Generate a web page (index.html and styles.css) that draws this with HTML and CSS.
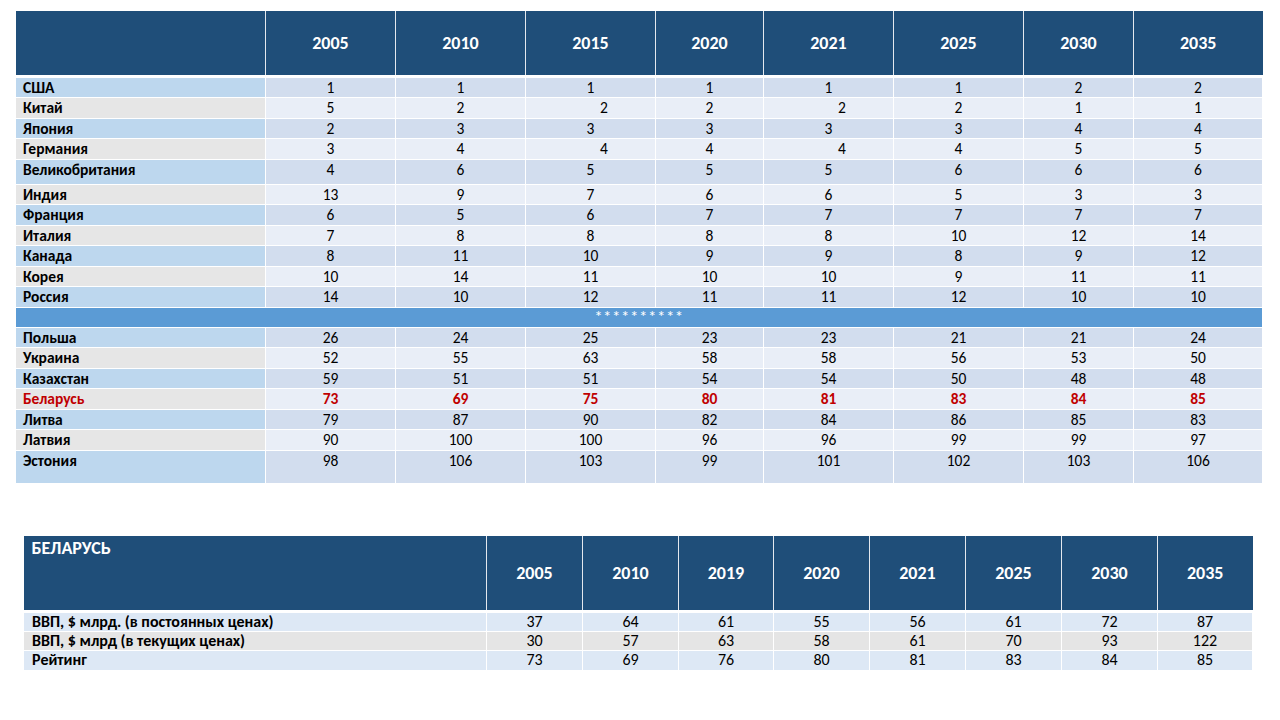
FILE: index.html
```html
<!DOCTYPE html>
<html lang="ru">
<head>
<meta charset="utf-8">
<title>Рейтинг ВВП</title>
<link rel="stylesheet" href="styles.css">
</head>
<body>
<div class="page">
  <table class="rank">
    <colgroup>
      <col class="c-label"><col class="c130"><col class="c130"><col class="c130"><col class="c108"><col class="c130"><col class="c130"><col class="c110"><col class="c129">
    </colgroup>
    <thead>
      <tr class="head"><th></th><th>2005</th><th>2010</th><th>2015</th><th>2020</th><th>2021</th><th>2025</th><th>2030</th><th>2035</th></tr>
    </thead>
    <tbody>
      <tr class="odd"><td class="lab">США</td><td>1</td><td>1</td><td>1</td><td>1</td><td>1</td><td>1</td><td>2</td><td>2</td></tr>
      <tr class="even"><td class="lab">Китай</td><td>5</td><td>2</td><td class="shift">2</td><td>2</td><td class="shift">2</td><td>2</td><td>1</td><td>1</td></tr>
      <tr class="odd"><td class="lab">Япония</td><td>2</td><td>3</td><td>3</td><td>3</td><td>3</td><td>3</td><td>4</td><td>4</td></tr>
      <tr class="even"><td class="lab">Германия</td><td>3</td><td>4</td><td class="shift">4</td><td>4</td><td class="shift">4</td><td>4</td><td>5</td><td>5</td></tr>
      <tr class="odd tall"><td class="lab">Великобритания</td><td>4</td><td>6</td><td>5</td><td>5</td><td>5</td><td>6</td><td>6</td><td>6</td></tr>
      <tr class="even"><td class="lab">Индия</td><td>13</td><td>9</td><td>7</td><td>6</td><td>6</td><td>5</td><td>3</td><td>3</td></tr>
      <tr class="odd"><td class="lab">Франция</td><td>6</td><td>5</td><td>6</td><td>7</td><td>7</td><td>7</td><td>7</td><td>7</td></tr>
      <tr class="even"><td class="lab">Италия</td><td>7</td><td>8</td><td>8</td><td>8</td><td>8</td><td>10</td><td>12</td><td>14</td></tr>
      <tr class="odd"><td class="lab">Канада</td><td>8</td><td>11</td><td>10</td><td>9</td><td>9</td><td>8</td><td>9</td><td>12</td></tr>
      <tr class="even"><td class="lab">Корея</td><td>10</td><td>14</td><td>11</td><td>10</td><td>10</td><td>9</td><td>11</td><td>11</td></tr>
      <tr class="odd"><td class="lab">Россия</td><td>14</td><td>10</td><td>12</td><td>11</td><td>11</td><td>12</td><td>10</td><td>10</td></tr>
      <tr class="sep"><td colspan="9">**********</td></tr>
      <tr class="odd"><td class="lab">Польша</td><td>26</td><td>24</td><td>25</td><td>23</td><td>23</td><td>21</td><td>21</td><td>24</td></tr>
      <tr class="even"><td class="lab">Украина</td><td>52</td><td>55</td><td>63</td><td>58</td><td>58</td><td>56</td><td>53</td><td>50</td></tr>
      <tr class="odd"><td class="lab">Казахстан</td><td>59</td><td>51</td><td>51</td><td>54</td><td>54</td><td>50</td><td>48</td><td>48</td></tr>
      <tr class="even hl"><td class="lab">Беларусь</td><td>73</td><td>69</td><td>75</td><td>80</td><td>81</td><td>83</td><td>84</td><td>85</td></tr>
      <tr class="odd"><td class="lab">Литва</td><td>79</td><td>87</td><td>90</td><td>82</td><td>84</td><td>86</td><td>85</td><td>83</td></tr>
      <tr class="even"><td class="lab">Латвия</td><td>90</td><td>100</td><td>100</td><td>96</td><td>96</td><td>99</td><td>99</td><td>97</td></tr>
      <tr class="odd last"><td class="lab">Эстония</td><td>98</td><td>106</td><td>103</td><td>99</td><td>101</td><td>102</td><td>103</td><td>106</td></tr>
    </tbody>
  </table>

  <table class="by">
    <colgroup>
      <col class="b-label"><col class="b96"><col class="b96"><col class="b95"><col class="b96"><col class="b96"><col class="b96"><col class="b96"><col class="b95">
    </colgroup>
    <thead>
      <tr class="bhead"><th class="title">БЕЛАРУСЬ</th><th>2005</th><th>2010</th><th>2019</th><th>2020</th><th>2021</th><th>2025</th><th>2030</th><th>2035</th></tr>
    </thead>
    <tbody>
      <tr class="blue"><td class="lab">ВВП, $ млрд. (в постоянных ценах)</td><td>37</td><td>64</td><td>61</td><td>55</td><td>56</td><td>61</td><td>72</td><td>87</td></tr>
      <tr class="gray"><td class="lab">ВВП, $ млрд (в текущих ценах)</td><td>30</td><td>57</td><td>63</td><td>58</td><td>61</td><td>70</td><td>93</td><td>122</td></tr>
      <tr class="blue"><td class="lab">Рейтинг</td><td>73</td><td>69</td><td>76</td><td>80</td><td>81</td><td>83</td><td>84</td><td>85</td></tr>
    </tbody>
  </table>
</div>
</body>
</html>
```

FILE: styles.css
```css
html, body {
  margin: 0;
  padding: 0;
  background: #ffffff;
}

body {
  font-family: Carlito, Calibri, Lato, "Liberation Sans", sans-serif;
  color: #000000;
}

.page {
  display: flex;
  flex-direction: column;
  align-items: flex-start;
  padding: 11px 0 0 15px;
}

table {
  border-collapse: collapse;
  table-layout: fixed;
}

td, th {
  border: 1px solid #ffffff;
  padding: 0;
  overflow: hidden;
  white-space: nowrap;
}

/* ---------- top table ---------- */
.rank {
  width: 1247px;
  font-size: 15.5px;
}

.c-label { width: 250px; }
.c130 { width: 130px; }
.c108 { width: 108px; }
.c110 { width: 110px; }
.c129 { width: 129px; }

.rank .head th {
  height: 64px;
  background: #1f4e79;
  color: #ffffff;
  font-size: 18px;
  font-weight: bold;
  text-align: center;
  vertical-align: middle;
  border-top: 0;
  border-bottom: 3px solid #ffffff;
  border-left: 1px solid #e4e8ee;
  border-right: 1px solid #e4e8ee;
}

.rank .head th:first-child { border-left: 0; }
.rank .head th:last-child { border-right: 0; }

.rank tbody tr { height: 20.5px; }
.rank tbody tr.tall { height: 25px; }
.rank tbody tr.last { height: 33px; }

.rank tbody td {
  text-align: center;
  vertical-align: top;
  line-height: 19px;
  padding-top: 0;
}

.rank tbody td.lab {
  text-align: left;
  font-weight: bold;
  font-size: 15.5px;
  padding-left: 7px;
}

.rank tr.odd td { background: #d2ddee; }
.rank tr.even td { background: #e9eef7; }
.rank tr.odd td.lab { background: #bdd7ee; }
.rank tr.even td.lab { background: #e6e6e6; }

.rank td.shift { padding-left: 27px; }

.rank tr.hl td {
  color: #c00000;
  font-weight: bold;
}

.rank tr.sep { height: 20px; }
.rank tr.sep td {
  background: #5b9bd5;
  color: #ffffff;
  text-align: center;
  vertical-align: top;
  font-size: 17px;
  line-height: 17px;
  padding: 0;
  overflow: visible;
  letter-spacing: 0.5px;
}

/* ---------- bottom table ---------- */
.by {
  width: 1229px;
  margin: 52px 0 0 8px;
  font-size: 16px;
}

.b-label { width: 463px; }
.b96 { width: 96px; }
.b95 { width: 95px; }

.by .bhead th {
  height: 73px;
  background: #1f4e79;
  color: #ffffff;
  font-size: 18px;
  font-weight: bold;
  text-align: center;
  vertical-align: middle;
  border-top: 0;
  border-bottom: 3px solid #ffffff;
  border-left: 1px solid #e4e8ee;
  border-right: 1px solid #e4e8ee;
}

.by .bhead th:first-child { border-left: 0; }
.by .bhead th:last-child { border-right: 0; }

.by .bhead th.title {
  text-align: left;
  vertical-align: top;
  font-size: 18px;
  padding: 1px 0 0 8px;
}

.by tbody tr { height: 19.5px; }

.by tbody td {
  text-align: center;
  vertical-align: top;
  line-height: 18px;
}

.by tbody td.lab {
  text-align: left;
  font-weight: bold;
  padding-left: 8px;
}

.by tr.blue td { background: #dde8f5; }
.by tr.gray td { background: #e5e5e5; }
```
